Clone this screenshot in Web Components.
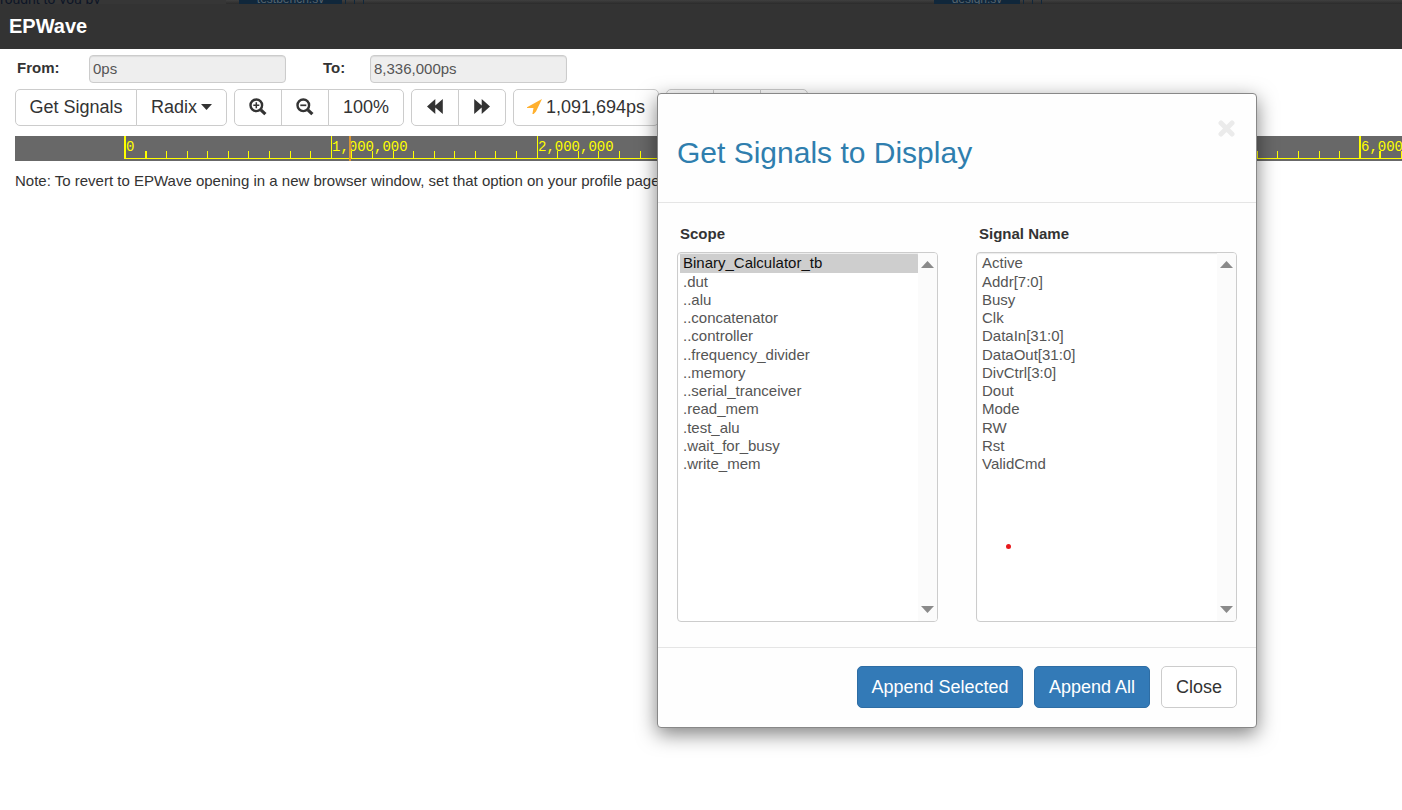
<!DOCTYPE html>
<html lang="en">
<head>
<meta charset="utf-8">
<title>EPWave</title>
<style>
html, body { margin: 0; background: #fff; }
body { font-family: "Liberation Sans", Arial, sans-serif; font-size: 15px; line-height: 20px; color: #333; overflow: hidden; }
</style>
</head>
<body>
<ep-app></ep-app>
<script>
const define = (name, html, setup) => {
  const template = document.createElement('template');
  template.innerHTML = html;
  customElements.define(name, class extends HTMLElement {
    constructor() {
      super();
      this.attachShadow({ mode: 'open' }).append(template.content.cloneNode(true));
    }
    connectedCallback() { if (setup) setup(this, this.shadowRoot); }
  });
};

/* Dimmed strip of the editor page that lies under the wave window */
define('ep-backdrop', `
<style>
:host { display: flex; height: 4px; overflow: hidden; background: linear-gradient(#3f3f3f, #2b2b2b); color: #0d1526; }
.cell { display: flex; flex: none; align-items: flex-end; height: 4px; box-sizing: border-box; }
.cell span { font-size: 14px; line-height: 16px; white-space: nowrap; margin-bottom: -3px; }
.intro { width: 226px; background: #363636; }
.rule { flex: none; width: 13px; }
.file { background: #10273b; color: #56646f; justify-content: center; }
.file span { font-size: 12px; }
.a { width: 103px; }
.b { width: 86px; }
.tabs { display: flex; flex: none; gap: 8px; padding-left: 3px; width: 592px; box-sizing: border-box; }
.tabs:last-child { flex: 1; }
.tabs i { width: 1px; height: 4px; background: #10273b; }
</style>
<div class="cell intro"><span>rought to you by</span></div>
<div class="rule"></div>
<div class="cell file a"><span>testbench.sv</span></div>
<div class="tabs"><i></i><i></i><i></i></div>
<div class="cell file b"><span>design.sv</span></div>
<div class="tabs"><i></i><i></i><i></i></div>
`);

define('ep-header', `
<style>
:host { display: block; background: #333; color: #fff; padding: 10px 9px; }
h1 { margin: 0; font-size: 20px; line-height: 25px; font-weight: bold; }
</style>
<h1><slot></slot></h1>
`);

define('ep-range', `
<style>
:host { display: flex; gap: 37px; padding: 6px 17px 0; }
.field { display: grid; grid-template-columns: 72px 197px; align-items: start; }
.to { grid-template-columns: 47px 197px; }
label { font-weight: bold; line-height: 26px; }
input { box-sizing: border-box; width: 100%; height: 28px; margin: 0; padding: 0 3px 2px; font: inherit; color: #555; background: #eee;
  border: 1px solid #ccc; border-radius: 4px; box-shadow: inset 0 1px 1px rgba(0,0,0,.08); }
</style>
<div class="field"><label for="from">From:</label><input id="from" readonly value="0ps"></div>
<div class="field to"><label for="to">To:</label><input id="to" readonly value="8,336,000ps"></div>
`);

define('ep-button', `
<style>
:host { display: block; }
button { box-sizing: border-box; display: flex; align-items: center; justify-content: center; gap: 4px; width: 100%; height: 37px; margin: 0; padding: 0 0 2px;
  font: 18px/24px "Liberation Sans", Arial, sans-serif; color: #333; background: #fff; border: 1px solid #ccc; white-space: nowrap;
  border-radius: var(--radius, 0); }
:host([primary]) button { background: #337ab7; border-color: #2e6da4; color: #fff; }
:host([large]) button { height: 42px; border-radius: 5px; padding-bottom: 0; }
</style>
<button type="button"><slot></slot></button>
`, (el, root) => {
  if (el.title) root.querySelector('button').setAttribute('aria-label', el.title);
});

define('ep-group', `
<style>
:host { display: flex; }
::slotted(*) { margin-left: -1px; width: 48px; }
::slotted(:first-child) { margin-left: 0; --radius: 5px 0 0 5px; }
::slotted(:last-child) { --radius: 0 5px 5px 0; }
::slotted(:only-child) { --radius: 5px; }
::slotted(.signals) { width: 122px; }
::slotted(.radix) { width: 91px; }
::slotted(.percent) { width: 76px; }
::slotted(.cursor) { width: 146px; }
</style>
<slot></slot>
`);

define('ep-toolbar', `
<style>
:host { display: flex; gap: 7px; padding: 6px 15px 0; }
svg { display: block; flex: none; }
</style>
<ep-group>
  <ep-button class="signals">Get Signals</ep-button>
  <ep-button class="radix">Radix <svg width="11" height="6" viewBox="0 0 11 6"><path d="M0 0h11L5.500 6z" fill="#333"/></svg></ep-button>
</ep-group>
<ep-group>
  <ep-button title="Zoom in"><svg width="18" height="18" viewBox="0 0 18 18" fill="none" stroke="#333"><circle cx="7.300" cy="7.300" r="5.800" stroke-width="2.400"/><path d="M11.800 11.800l4.600 4.300" stroke-width="3.200"/><path d="M4.300 7.300h6M7.300 4.300v6" stroke-width="1.500"/></svg></ep-button>
  <ep-button title="Zoom out"><svg width="18" height="18" viewBox="0 0 18 18" fill="none" stroke="#333"><circle cx="7.300" cy="7.300" r="5.800" stroke-width="2.400"/><path d="M11.800 11.800l4.600 4.300" stroke-width="3.200"/><path d="M4.300 7.300h6" stroke-width="1.700"/></svg></ep-button>
  <ep-button class="percent">100%</ep-button>
</ep-group>
<ep-group>
  <ep-button title="Back"><svg width="16" height="15" viewBox="0 0 16 15"><path d="M8.300 0v6.500L15.800 0v15L8.300 8.500V15L0 7.500z" fill="#333"/></svg></ep-button>
  <ep-button title="Forward"><svg width="16" height="15" viewBox="0 0 16 15"><path d="M7.700 0v6.500L.2 0v15l7.500-6.500V15L16 7.500z" fill="#333"/></svg></ep-button>
</ep-group>
<ep-group>
  <ep-button class="cursor"><svg width="15" height="15" viewBox="0 0 15 15"><path d="M15 0L0 8.300V9h6.500L5.400 15h1.300L9 12.500z" fill="#ffb02e"/></svg> 1,091,694ps</ep-button>
</ep-group>
<ep-group>
  <ep-button title="Previous edge"></ep-button>
  <ep-button title="Next edge"></ep-button>
  <ep-button title="More"></ep-button>
</ep-group>
`);

/* Time ruler: ten minor ticks for each major one; the dialog covers the middle labels */
define('ep-ruler', `
<style>
:host { display: block; margin: 10px 0 0 15px; }
svg { display: block; width: 100%; height: 25px; background: #686868; }
text { font: 14px "Liberation Mono", monospace; fill: #ff0; }
</style>
<svg role="img" aria-label="Time ruler"></svg>
`, (el, root) => {
  const start = 110, major = 205.8, labels = { 0: '0', 10: '1,000,000', 20: '2,000,000', 60: '6,000,000' };
  let out = `<rect x="${start - 1}" y="22" width="4000" height="1" fill="#ff0"/>`;
  for (let i = 0; i <= 83; i++) {
    const x = Math.round(start + i * major / 10);
    const isMajor = i % 10 === 0;
    const wide = i % 60 < 2;
    out += `<rect x="${wide ? x - 1 : x}" y="${isMajor ? 0 : 15}" width="${wide ? 2 : 1}" height="${isMajor ? 23 : 8}" fill="#ff0"/>`;
    if (labels[i]) out += `<text x="${x + 1}" y="15">${labels[i]}</text>`;
  }
  out += `<rect x="334" y="0" width="2" height="25" fill="#dc9632"/>`;
  root.querySelector('svg').innerHTML = out;
});

define('ep-list', `
<style>
:host { display: block; width: 261px; }
label { display: block; font-weight: bold; margin: 0 0 8px 3px; }
.box { display: flex; box-sizing: border-box; height: 370px; border: 1px solid #ccc; border-radius: 4px; overflow: hidden; background: #fff; box-shadow: inset 0 1px 1px rgba(0,0,0,.08); }
select { flex: 1; min-width: 0; height: 100%; box-sizing: border-box; margin: 0; padding: 1px 0 0 2px; border: 0; outline: 0; background: transparent;
  font: inherit; color: #555; overflow: hidden; scrollbar-width: none; }
option { min-height: 0; padding: 0 2px 1px 3px; }
option:nth-child(4n+1) { padding-bottom: 2px; }
.bar { width: 19px; display: flex; flex-direction: column; justify-content: space-between; align-items: center; padding: 8px 0; box-sizing: border-box; background: #fbfbfb; }
</style>
<label for="list"></label>
<div class="box">
  <select id="list" multiple></select>
  <div class="bar">
    <svg width="13" height="7" viewBox="0 0 13 7"><path d="M0 7L6.500 0 13 7z" fill="#8a8a8a"/></svg>
    <svg width="13" height="7" viewBox="0 0 13 7"><path d="M0 0h13L6.500 7z" fill="#8a8a8a"/></svg>
  </div>
</div>
`, (el, root) => {
  root.querySelector('label').textContent = el.getAttribute('label');
  const select = root.querySelector('select');
  el.getAttribute('items').split(' ').forEach(name => {
    select.append(new Option(name, name, false, name === el.getAttribute('selected')));
  });
});

define('ep-dialog', `
<style>
:host { position: absolute; left: 657px; top: 93px; width: 600px; box-sizing: border-box; background: #fefefe; border: 1px solid #888; border-radius: 4px; box-shadow: 0 6px 20px rgba(0,0,0,.5); }
header { display: flex; justify-content: space-between; align-items: flex-start; padding: 26px 20px 30px 19px; border-bottom: 1px solid #e5e5e5; }
h2 { margin: 14px 0 0; font-size: 30px; line-height: 38px; font-weight: normal; color: #2f7eae; }
.close { border: 0; background: none; padding: 0; margin: 0; width: 18px; height: 17px; }
.close svg { display: block; }
main { display: flex; justify-content: space-between; padding: 21px 19px 25px; }
footer { display: flex; justify-content: flex-end; padding: 18px 19px 19px; gap: 11px; border-top: 1px solid #e5e5e5; }
.wide { width: 166px; }
.mid { width: 116px; }
.small { width: 76px; }
</style>
<header>
  <h2>Get Signals to Display</h2>
  <button class="close" type="button" aria-label="Close dialog"><svg width="17" height="17" viewBox="0 0 17 17"><path d="M3 3l11 11M14 3L3 14" stroke="#ebebeb" stroke-width="5" stroke-linecap="round"/></svg></button>
</header>
<main>
  <ep-list label="Scope" selected="Binary_Calculator_tb" items="Binary_Calculator_tb .dut ..alu ..concatenator ..controller ..frequency_divider ..memory ..serial_tranceiver .read_mem .test_alu .wait_for_busy .write_mem"></ep-list>
  <ep-list label="Signal Name" items="Active Addr[7:0] Busy Clk DataIn[31:0] DataOut[31:0] DivCtrl[3:0] Dout Mode RW Rst ValidCmd"></ep-list>
</main>
<footer>
  <ep-button class="wide" primary large>Append Selected</ep-button>
  <ep-button class="mid" primary large>Append All</ep-button>
  <ep-button class="small" large>Close</ep-button>
</footer>
`);

/* Pointer mark over the signal list */
define('ep-pointer', `
<style>
:host { position: absolute; left: 1006px; top: 544px; width: 5px; height: 5px; border-radius: 50%; background: #e8191c; }
</style>
`);

define('ep-app', `
<style>
:host { display: block; }
p { margin: 10px 0 0 15px; }
</style>
<ep-backdrop></ep-backdrop>
<ep-header>EPWave</ep-header>
<ep-range></ep-range>
<ep-toolbar></ep-toolbar>
<ep-ruler></ep-ruler>
<p>Note: To revert to EPWave opening in a new browser window, set that option on your profile page.</p>
<ep-dialog></ep-dialog>
<ep-pointer></ep-pointer>
`);
</script>
</body>
</html>
